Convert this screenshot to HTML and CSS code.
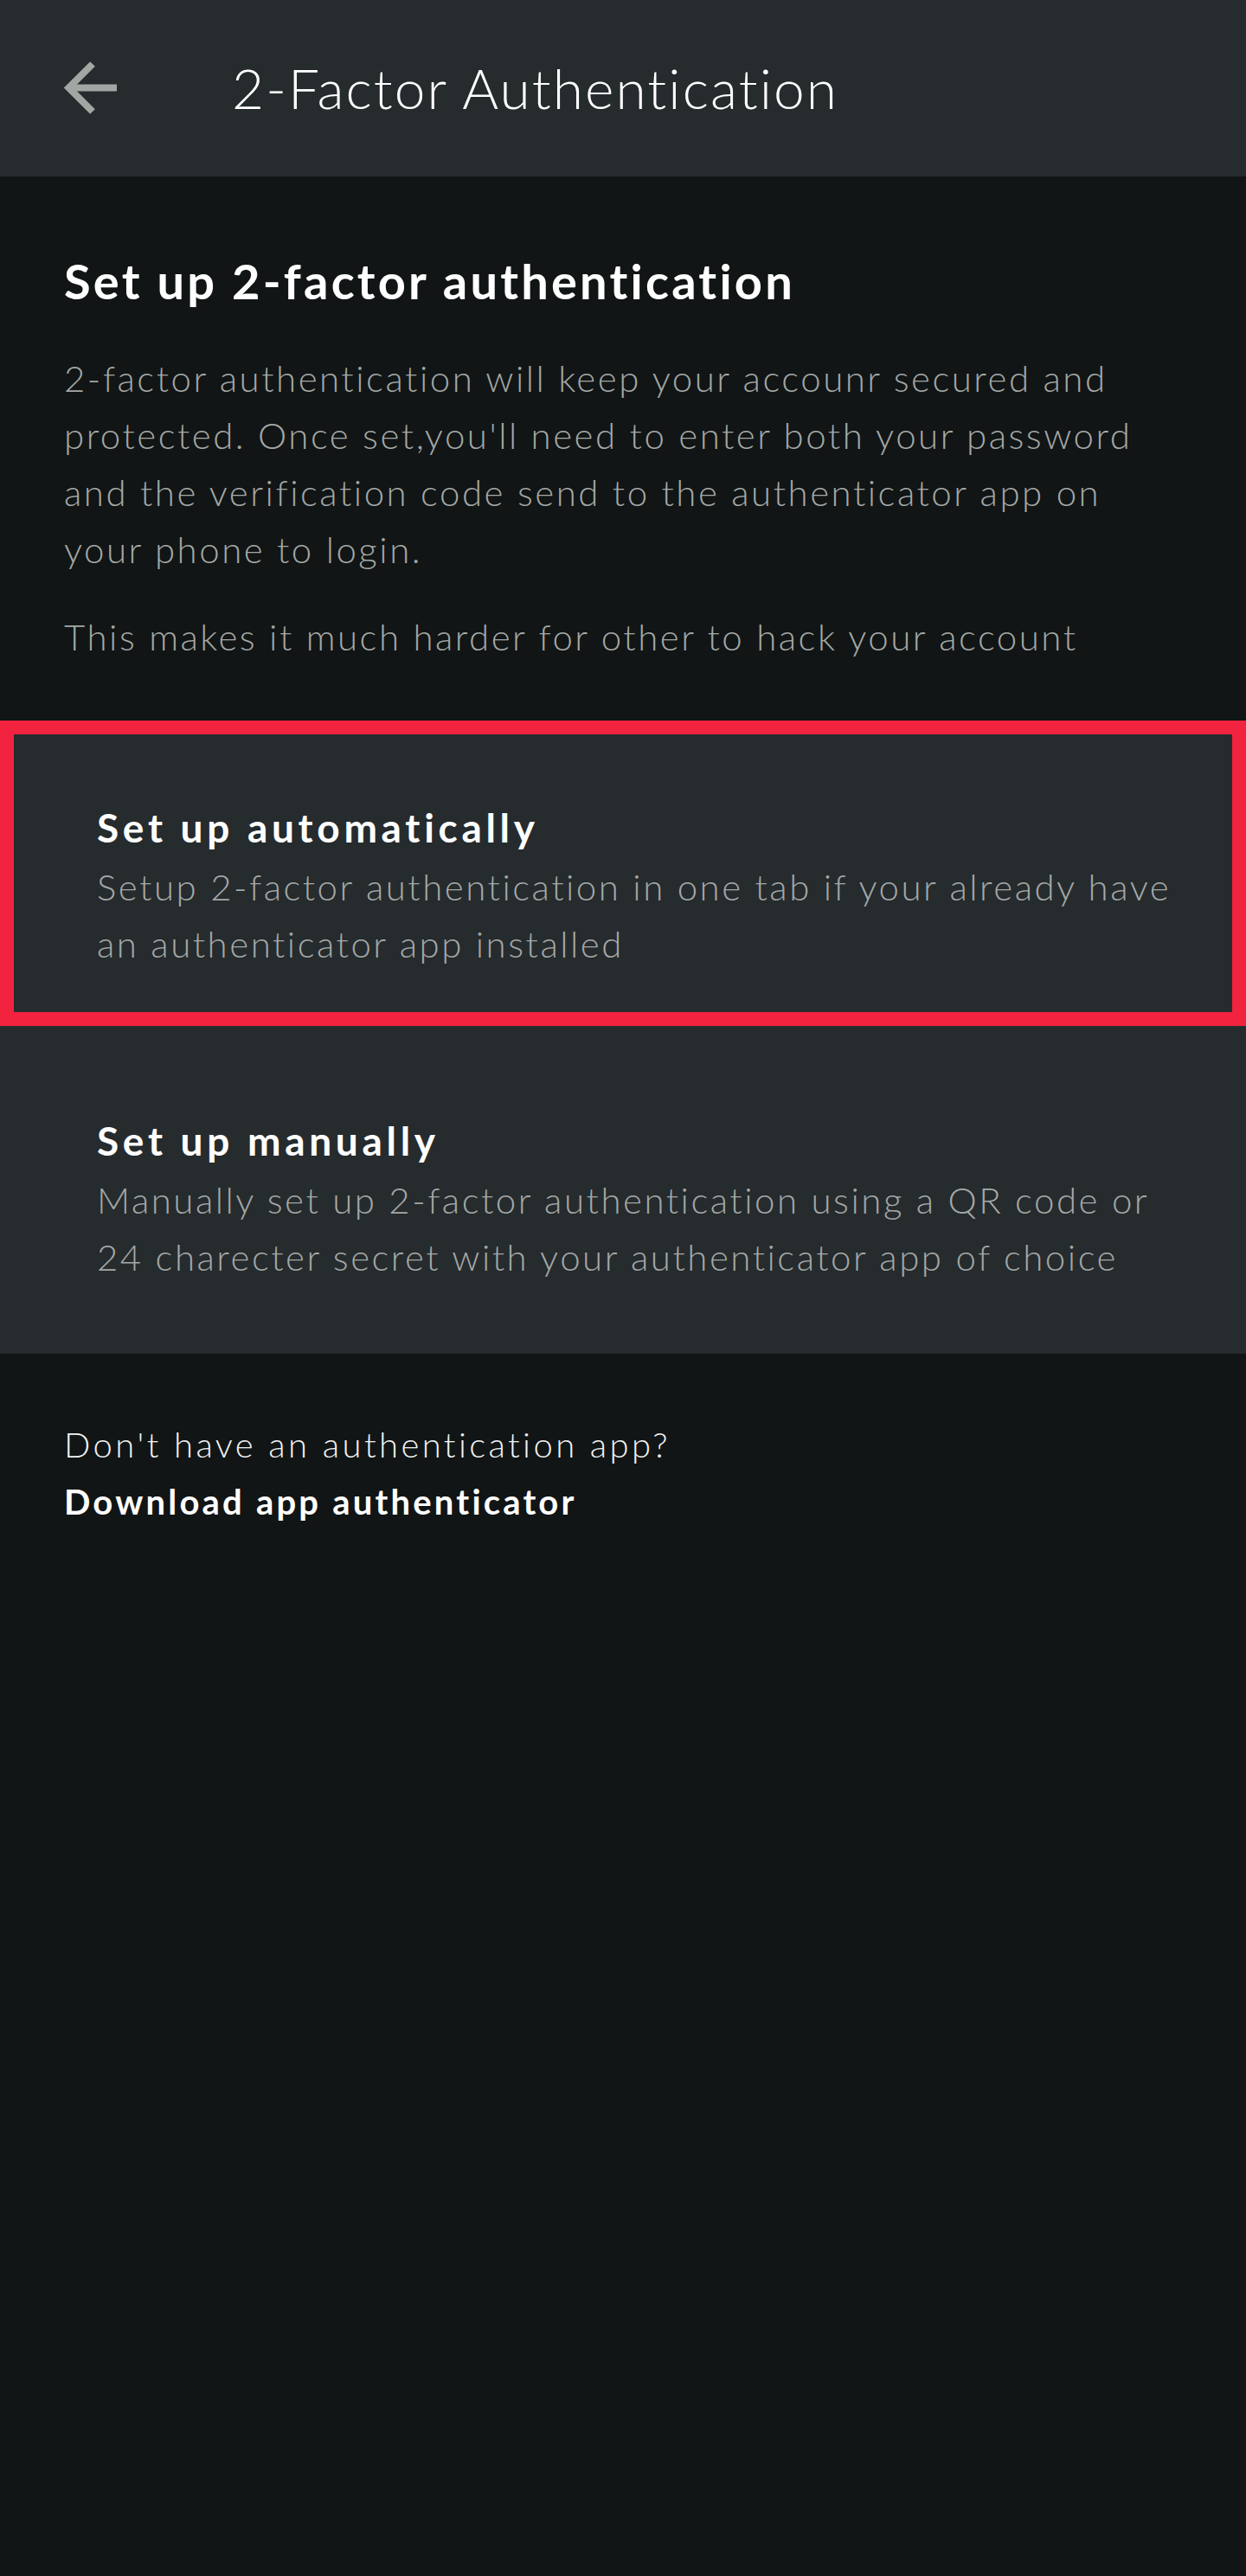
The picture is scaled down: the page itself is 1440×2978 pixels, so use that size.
FILE: index.html
```html
<!DOCTYPE html>
<html lang="en">
<head>
<meta charset="utf-8">
<title>2-Factor Authentication</title>
<link rel="stylesheet" href="styles.css">
</head>
<body>
<div class="screen">
  <header class="topbar">
    <button class="back" aria-label="Back">
      <svg width="62" height="62" viewBox="0 0 62 62" fill="none" stroke="#a1a8a3" stroke-width="8" stroke-linecap="butt" stroke-linejoin="miter">
        <path d="M61 30.5H5"/>
        <path d="M33 3L5.5 30.5L33 58"/>
      </svg>
    </button>
    <h2 class="topbar-title">2-Factor Authentication</h2>
  </header>

  <section class="intro">
    <h1 class="intro-title">Set up 2-factor authentication</h1>
    <p class="intro-text">2-factor authentication will keep your accounr secured and protected. Once set,you'll need to enter both your password and the verification code send to the authenticator app on your phone to login.</p>
    <p class="intro-text intro-text-last">This makes it much harder for other to hack your account</p>
  </section>

  <div class="option option-selected">
    <h3 class="option-title">Set up automatically</h3>
    <p class="option-text">Setup 2-factor authentication in one tab if your already have an authenticator app installed</p>
  </div>

  <div class="option option-plain">
    <h3 class="option-title">Set up manually</h3>
    <p class="option-text">Manually set up 2-factor authentication using a QR code or 24 charecter secret with your authenticator app of choice</p>
  </div>

  <footer class="help">
    <p class="help-question">Don't have an authentication app?</p>
    <a class="help-link" href="#">Download app authenticator</a>
  </footer>
</div>
</body>
</html>
```

FILE: styles.css
```css
* { box-sizing: border-box; }

html, body {
  margin: 0;
  padding: 0;
  background: #111515;
}

body {
  font-family: Lato, "Noto Sans", "DejaVu Sans", sans-serif;
  color: #ffffff;
}

.screen {
  width: 1440px;
  min-height: 2978px;
  background: #111515;
  display: flex;
  flex-direction: column;
}

.topbar {
  height: 204px;
  background: #262b2e;
  display: flex;
  align-items: center;
  padding-left: 74px;
  gap: 132px;
}

.back {
  background: none;
  border: 0;
  padding: 0;
  width: 62px;
  height: 62px;
  display: flex;
  cursor: pointer;
}

.topbar-title {
  margin: 0;
  font-weight: 300;
  font-size: 64px;
  line-height: 80px;
  color: #ffffff;
  letter-spacing: 2.1px;
}

.intro {
  padding: 87px 100px 64px 74px;
}

.intro-title {
  margin: 0 0 45px;
  font-weight: 700;
  font-size: 56px;
  line-height: 68px;
  color: #ffffff;
  letter-spacing: 3.2px;
}

.intro-text {
  margin: 0;
  font-weight: 300;
  font-size: 42px;
  line-height: 66px;
  color: #a4a8a6;
  letter-spacing: 2.5px;
}

.intro-text-last {
  margin-top: 35px;
}

.option {
  background: #262b2e;
  display: flex;
  flex-direction: column;
  gap: 7px;
}

.option-selected {
  border: 16px solid #f2233f;
  padding: 80px 30px 46px 96px;
}

.option-plain {
  padding: 104px 100px 79px 112px;
  border-top: 1px solid #2b3033;
}

.option-title {
  margin: 0;
  font-weight: 700;
  font-size: 46px;
  line-height: 56px;
  color: #ffffff;
  letter-spacing: 4.7px;
}

.option-text {
  margin: 0;
  font-weight: 300;
  font-size: 42px;
  line-height: 66px;
  color: #a4a8a6;
  letter-spacing: 2.5px;
}

.help {
  padding: 72px 74px;
  display: flex;
  flex-direction: column;
  align-items: flex-start;
}

.help-question {
  margin: 0;
  font-weight: 300;
  font-size: 40px;
  line-height: 66px;
  color: #f2f2f2;
  letter-spacing: 3.4px;
}

.help-link {
  font-weight: 700;
  font-size: 40px;
  line-height: 66px;
  color: #ffffff;
  text-decoration: none;
  letter-spacing: 3.2px;
}
```
